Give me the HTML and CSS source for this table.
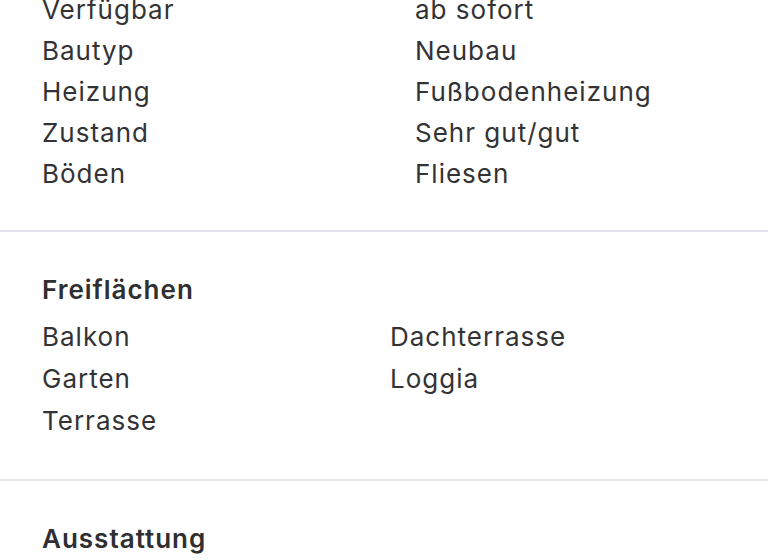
FILE: index.html
```html
<!DOCTYPE html>
<html lang="de">
<head>
<meta charset="utf-8">
<title>Exposé Details</title>
<link rel="stylesheet" href="styles.css">
</head>
<body>
<main class="page">
  <section class="section specs">
    <dl class="spec-grid">
      <dt>Verfügbar</dt><dd>ab sofort</dd>
      <dt>Bautyp</dt><dd>Neubau</dd>
      <dt>Heizung</dt><dd>Fußbodenheizung</dd>
      <dt>Zustand</dt><dd>Sehr gut/gut</dd>
      <dt>Böden</dt><dd>Fliesen</dd>
    </dl>
  </section>
  <hr class="divider divider-lilac">
  <section class="section features">
    <h2 class="section-title">Freiflächen</h2>
    <ul class="feature-grid">
      <li>Balkon</li>
      <li>Dachterrasse</li>
      <li>Garten</li>
      <li>Loggia</li>
      <li>Terrasse</li>
    </ul>
  </section>
  <hr class="divider divider-grey">
  <section class="section features">
    <h2 class="section-title">Ausstattung</h2>
  </section>
</main>
</body>
</html>
```

FILE: styles.css
```css
* { box-sizing: border-box; }

html, body {
  margin: 0;
  padding: 0;
  background: #ffffff;
  overflow: hidden;
}

body {
  font-family: Inter, "Noto Sans", "Liberation Sans", sans-serif;
  font-size: 26px;
  letter-spacing: 1px;
  color: #333335;
  -webkit-font-smoothing: antialiased;
}

.page {
  margin-top: -11px;
}

.section {
  padding: 0 42px;
}

.specs {
  padding-bottom: 36px;
}

.spec-grid {
  display: grid;
  grid-template-columns: 373px 1fr;
  margin: 0;
  line-height: 41px;
}

.spec-grid dt,
.spec-grid dd {
  margin: 0;
}

.divider {
  margin: 0;
  border: 0;
  height: 2px;
}

.divider-lilac { background: #e3e2ee; }
.divider-grey { background: #e8e8ea; }

.features {
  padding-top: 43px;
  padding-bottom: 37px;
}

.section-title {
  margin: 0 0 11px;
  font-size: 26px;
  font-weight: 600;
  line-height: 30px;
  color: #2f2f31;
}

.feature-grid {
  list-style: none;
  margin: 0;
  padding: 0;
  display: grid;
  grid-template-columns: 1fr 1fr;
  column-gap: 12px;
  line-height: 42px;
}
```
